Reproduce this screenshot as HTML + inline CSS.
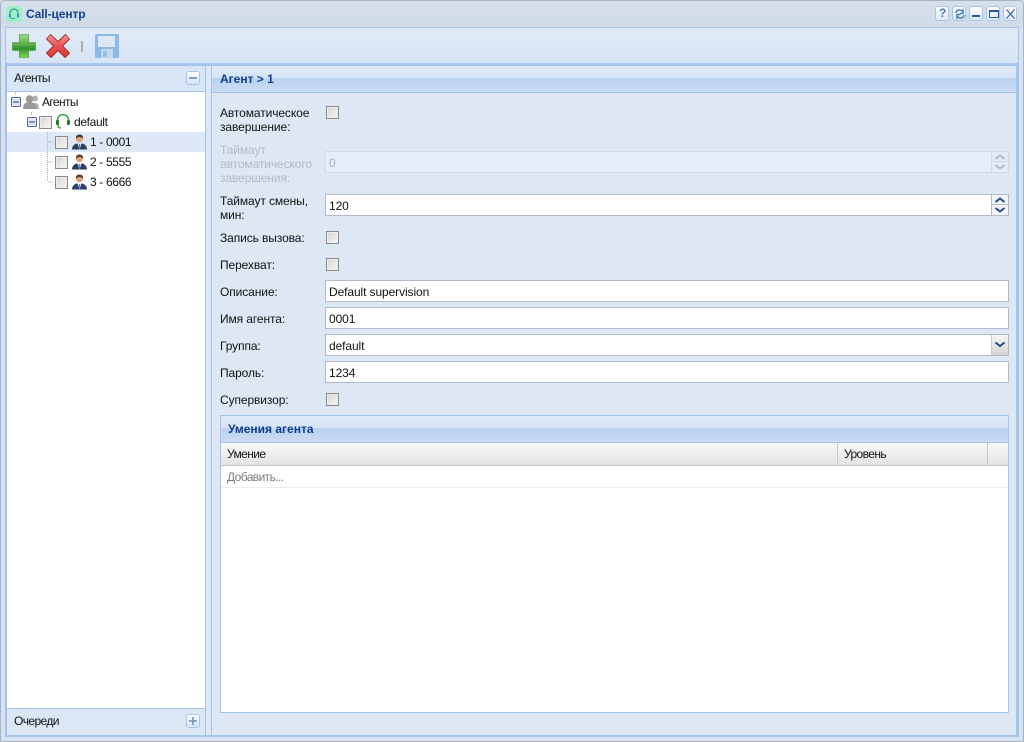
<!DOCTYPE html>
<html><head><meta charset="utf-8">
<style>
html,body{margin:0;padding:0}
body{width:1024px;height:742px;overflow:hidden;position:relative;background:#d0dcea;font:12px/14px "Liberation Sans",Arial,sans-serif;color:#111;letter-spacing:-.1px}
div,span,b{position:absolute;box-sizing:border-box;white-space:nowrap}
svg{position:absolute;overflow:visible}
.lbl{left:220px;width:100px;white-space:normal}
.cb{width:13px;height:13px;border:1px solid #8a8a8a;background:linear-gradient(135deg,#d4d4d4,#f8f8f8);box-shadow:inset 0 0 0 1px #eee}
.inp{left:325px;width:684px;height:22px;border:1px solid #b3bacb;background:#fff;padding:4px 3px;line-height:14px}
.btn{top:6px;width:14px;height:15px;border:1px solid #a8c4e8;border-radius:3px;background:linear-gradient(#fff,#dce8f8)}
.hdr{background:linear-gradient(#dfeaf8 0,#d5e3f6 46%,#bad0f0 48%,#cbdcf3 100%)}
.t{color:#10408c;font-weight:bold;letter-spacing:0}
.n{letter-spacing:-.35px}
.s{letter-spacing:-.6px}
</style></head><body>
<div style="left:0;top:0;width:1024px;height:742px;border:1px solid #a9b4c2;border-radius:5px 5px 0 0;background:linear-gradient(#d7e0eb 0,#cfdbe9 26px,#d6e2f1 27px)"></div>
<svg style="left:6px;top:6px" width="16" height="16"><rect width="16" height="16" rx="3" fill="#9cf0c8"/><path d="M4 9V7a4 4 0 0 1 8 0v2" fill="none" stroke="#3f95a5" stroke-width="1.200"/><rect x="3" y="8" width="2" height="3.500" fill="#3a8fc0"/><rect x="11" y="8" width="2" height="3.500" fill="#3a8fc0"/><path d="M5 12.500h4" stroke="#3f95a5"/></svg>
<span class="t" style="left:26px;top:7px;font-size:12px;color:#15428b;letter-spacing:-.1px">Call-центр</span>

<div class="btn" style="left:935px"><b style="left:3px;top:0;color:#4a7cb8;font-size:12px;line-height:13px">?</b></div>
<div class="btn" style="left:952px"><svg style="left:1.500px;top:1.500px" width="10" height="10"><path d="M1 4a3.500 3.500 0 0 1 6-2l1-1v3.500H4.800M9 6a3.500 3.500 0 0 1-6 2l-1 1V5.500h3.200" fill="none" stroke="#4a7cb8" stroke-width="1.500"/></svg></div>
<div class="btn" style="left:969px"><svg style="left:2px;top:8px" width="8" height="3"><rect width="8" height="2" fill="#2f55a4"/></svg></div>
<div class="btn" style="left:986px"><svg style="left:1.500px;top:3px" width="10" height="8"><rect x=".5" y=".5" width="9" height="7" fill="none" stroke="#2f55a4"/><rect width="10" height="2" fill="#2f55a4"/></svg></div>
<div class="btn" style="left:1003px"><svg style="left:2px;top:2px" width="9" height="10"><path d="M.5 .5l8 9M8.500 .5l-8 9" stroke="#3f5f9f" stroke-width="1.200"/></svg></div>

<div style="left:5px;top:27px;width:1014px;height:710px;border:1px solid #a3c3ec;border-bottom:0;background:linear-gradient(#e1ebf7,#d6e3f4 36px,#dee8f5 37px)"></div>
<div style="left:6px;top:63px;width:1012px;height:3px;background:#a9c7ee"></div>

<svg style="left:12px;top:34px" width="24" height="24"><defs><linearGradient id="g" x1="0" y1="0" x2="0" y2="1"><stop offset="0" stop-color="#9ad880"/><stop offset=".45" stop-color="#5aaf48"/><stop offset=".6" stop-color="#2f8f2a"/><stop offset="1" stop-color="#78d848"/></linearGradient></defs><path d="M7.500 .5h9v8h7v8h-7v7h-9v-7H.5v-8h7z" fill="url(#g)" stroke="#3d8a35" stroke-width=".6" stroke-linejoin="round"/></svg>
<svg style="left:46px;top:34px" width="24" height="24"><defs><linearGradient id="r" x1="0" y1="0" x2="0" y2="1"><stop offset="0" stop-color="#f49a9a"/><stop offset=".5" stop-color="#e65050"/><stop offset="1" stop-color="#d83a3a"/></linearGradient></defs><path d="M4.500 .5l7.500 7 7.500-7 4 4.500-7 7 7 7-4.500 4.500-7-7-7 7L.5 19l7-7-7-7z" fill="url(#r)" stroke="#a82828" stroke-width=".9" stroke-linejoin="round"/></svg>
<div style="left:81px;top:41px;width:2px;height:11px;background:#a5adb8"></div>
<svg style="left:95px;top:34px;opacity:.85" width="24" height="24"><rect width="24" height="24" rx="1" fill="#7db2e6"/><rect x="3" y="2" width="17" height="11" fill="#dfe8f5"/><rect x="6" y="15" width="12" height="9" fill="#c3d6ee"/><rect x="8" y="17" width="4" height="6" fill="#8fb9e6"/></svg>

<!-- left panel -->
<div style="left:6px;top:65px;width:200px;height:672px;border:1px solid #a3c3ec;border-bottom:2px solid #a3c3ec;background:#dce7f6"></div>
<div style="left:7px;top:66px;width:198px;height:26px;background:#d9e6f7"></div>
<span class="s" style="left:14px;top:71px">Агенты</span>
<div style="left:186px;top:71px;width:14px;height:14px;border:1px solid #a8c4e8;border-radius:3px;background:linear-gradient(#fff,#d6e4f6)"><div style="left:2px;top:5px;width:8px;height:2px;background:#7f9dc0"></div></div>
<div style="left:7px;top:91px;width:198px;height:618px;background:#fff;border-top:1px solid #a3c3ec;border-bottom:1px solid #a3c3ec"></div>
<div style="left:7px;top:132px;width:198px;height:20px;background:#dfe8f6"></div>
<svg style="left:0;top:0" width="210" height="200"><path d="M15.500 92v4M31.500 112v4M47.500 132v50M48 142h6M48 162h6M48 182h6" stroke="#aaa" stroke-dasharray="1 1" fill="none"/></svg>

<svg style="left:11px;top:97px" width="10" height="10"><rect x=".5" y=".5" width="9" height="9" rx="1" fill="#dfe8f4" stroke="#546a8c"/><path d="M2 5h6" stroke="#1e3f70"/></svg>
<svg style="left:23px;top:95px" width="16" height="15"><circle cx="12" cy="3.500" r="3" fill="#b0b0b0"/><path d="M9 14c0-4 0-6 3-6s4 2 4 6z" fill="#b0b0b0"/><circle cx="6.500" cy="4" r="3.700" fill="#999"/><path d="M0 14c0-5 2-7 6.500-7s6.500 2 6.500 7z" fill="#999"/></svg>
<span class="s" style="left:42px;top:95px">Агенты</span>

<svg style="left:27px;top:117px" width="10" height="10"><rect x=".5" y=".5" width="9" height="9" rx="1" fill="#dfe8f4" stroke="#546a8c"/><path d="M2 5h6" stroke="#1e3f70"/></svg>
<div class="cb" style="left:39px;top:116px"></div>
<svg style="left:55px;top:113px" width="16" height="16"><path d="M2.500 8V7a5.500 5.500 0 0 1 11 0v1" fill="none" stroke="#3aa545" stroke-width="1.500"/><rect x="1" y="7" width="3" height="5" rx="1" fill="#1f7a2a"/><rect x="12" y="7" width="3" height="5" rx="1" fill="#1f7a2a"/><path d="M3 12c0 2 1 3 3 3" fill="none" stroke="#2f9a3a" stroke-width="1.300"/></svg>
<span class="n" style="left:74px;top:115px">default</span>

<div class="cb" style="left:55px;top:136px"></div>
<svg style="left:72px;top:134px" width="15" height="16"><path d="M0 15.500c0-4 3-5.500 4.500-6h6c1.500 .5 4.500 2 4.500 6z" fill="#2e3f62"/><path d="M5.500 9.500h4L7.500 15.500z" fill="#e8eef6"/><path d="M6.800 10h1.400l-.3 5h-.8z" fill="#4f86c8"/><circle cx="7.500" cy="5" r="3.300" fill="#dca47c"/><path d="M4 5c-.5-3 1-4.500 3.500-4.500S11.500 2 11 5c-1-1.500-2-2-3.500-2S5 3.500 4 5z" fill="#5a3a24"/></svg>
<span class="n" style="left:90px;top:135px">1 - 0001</span>
<div class="cb" style="left:55px;top:156px"></div>
<svg style="left:72px;top:154px" width="15" height="16"><path d="M0 15.500c0-4 3-5.500 4.500-6h6c1.500 .5 4.500 2 4.500 6z" fill="#2e3f62"/><path d="M5.500 9.500h4L7.500 15.500z" fill="#e8eef6"/><path d="M6.800 10h1.400l-.3 5h-.8z" fill="#4f86c8"/><circle cx="7.500" cy="5" r="3.300" fill="#dca47c"/><path d="M4 5c-.5-3 1-4.500 3.500-4.500S11.500 2 11 5c-1-1.500-2-2-3.500-2S5 3.500 4 5z" fill="#5a3a24"/></svg>
<span class="n" style="left:90px;top:155px">2 - 5555</span>
<div class="cb" style="left:55px;top:176px"></div>
<svg style="left:72px;top:174px" width="15" height="16"><path d="M0 15.500c0-4 3-5.500 4.500-6h6c1.500 .5 4.500 2 4.500 6z" fill="#2e3f62"/><path d="M5.500 9.500h4L7.500 15.500z" fill="#e8eef6"/><path d="M6.800 10h1.400l-.3 5h-.8z" fill="#4f86c8"/><circle cx="7.500" cy="5" r="3.300" fill="#dca47c"/><path d="M4 5c-.5-3 1-4.500 3.500-4.500S11.500 2 11 5c-1-1.500-2-2-3.500-2S5 3.500 4 5z" fill="#5a3a24"/></svg>
<span class="n" style="left:90px;top:175px">3 - 6666</span>

<span class="s" style="left:14px;top:714px">Очереди</span>
<div style="left:186px;top:714px;width:14px;height:14px;border:1px solid #a8c4e8;border-radius:3px;background:linear-gradient(#fff,#d6e4f6)"><svg style="left:2px;top:2px" width="8" height="8"><path d="M4 0v8M0 4h8" stroke="#6d8db8" stroke-width="1.500"/></svg></div>

<!-- right panel -->
<div style="left:211px;top:65px;width:806px;height:672px;border:1px solid #a3c3ec;border-radius:3px 3px 0 0;background:#dee8f5"></div>
<div style="left:1016px;top:65px;width:3px;height:672px;background:#a6c5ed"></div>
<div style="left:6px;top:735px;width:1013px;height:2px;background:#a6c5ed"></div>
<div class="hdr" style="left:212px;top:66px;width:804px;height:27px;border-bottom:1px solid #a3c3ec"></div>
<span class="t" style="left:220px;top:72px">Агент &gt; 1</span>

<div class="lbl" style="top:106px">Автоматическое завершение:</div>
<div class="cb" style="left:326px;top:106px"></div>
<div class="lbl" style="top:143px;color:#b3b9c2">Таймаут автоматического завершения:</div>
<div class="inp" style="top:151px;background:#e8eef9;border-color:#d2d9e6;color:#a9afb8">0</div>
<div style="left:991px;top:151px;width:18px;height:22px;background:#e4ebf6;border:1px solid #d2d9e6"></div>
<div style="left:992px;top:161px;width:16px;height:1px;background:#d2d9e6"></div>
<svg style="left:995px;top:153px" width="10" height="18"><path d="M.5 6L5 2.500 9.500 6M.5 12L5 15.500 9.500 12" fill="none" stroke="#aebcd8" stroke-width="2"/></svg>

<div class="lbl" style="top:194px">Таймаут смены, мин:</div>
<div class="inp" style="top:194px">120</div>
<div style="left:991px;top:194px;width:18px;height:22px;background:#f1f3f8;border:1px solid #b3bacb"></div>
<div style="left:992px;top:204px;width:16px;height:1px;background:#b3bacb"></div>
<svg style="left:995px;top:196px" width="10" height="18"><path d="M.5 6L5 2.500 9.500 6M.5 12L5 15.500 9.500 12" fill="none" stroke="#2a4a88" stroke-width="2"/></svg>

<div class="lbl" style="top:231px">Запись вызова:</div>
<div class="cb" style="left:326px;top:231px"></div>
<div class="lbl" style="top:258px">Перехват:</div>
<div class="cb" style="left:326px;top:258px"></div>
<div class="lbl" style="top:285px">Описание:</div>
<div class="inp" style="top:280px">Default supervision</div>
<div class="lbl" style="top:312px">Имя агента:</div>
<div class="inp" style="top:307px">0001</div>
<div class="lbl" style="top:339px">Группа:</div>
<div class="inp" style="top:334px">default</div>
<div style="left:991px;top:335px;width:17px;height:20px;background:linear-gradient(#f5f5f5,#d4d4d4);border-left:1px solid #c4c8d2"></div>
<svg style="left:995px;top:341px" width="10" height="8"><path d="M.5 1.500L5 5l4.500-3.500" fill="none" stroke="#2a4a88" stroke-width="2"/></svg>
<div class="lbl" style="top:366px">Пароль:</div>
<div class="inp" style="top:361px">1234</div>
<div class="lbl" style="top:393px">Супервизор:</div>
<div class="cb" style="left:326px;top:393px"></div>

<div style="left:220px;top:415px;width:789px;height:298px;border:1px solid #a3c3ec;background:#fff"></div>
<div class="hdr" style="left:221px;top:416px;width:787px;height:27px;border-bottom:1px solid #a3c3ec"></div>
<span class="t" style="left:228px;top:422px">Умения агента</span>
<div style="left:221px;top:443px;width:787px;height:23px;background:linear-gradient(#f9f9f9,#e4e4e4);border-bottom:1px solid #c5c5c5"></div>
<div style="left:837px;top:443px;width:1px;height:22px;background:#c8c8c8"></div>
<div style="left:987px;top:443px;width:1px;height:22px;background:#c8c8c8"></div>
<span class="s" style="left:227px;top:447px">Умение</span>
<span class="s" style="left:844px;top:447px">Уровень</span>
<span class="s" style="left:227px;top:470px;color:#7d7d7d">Добавить...</span>
<div style="left:221px;top:487px;width:787px;height:1px;background:#ededed"></div>
</body></html>
